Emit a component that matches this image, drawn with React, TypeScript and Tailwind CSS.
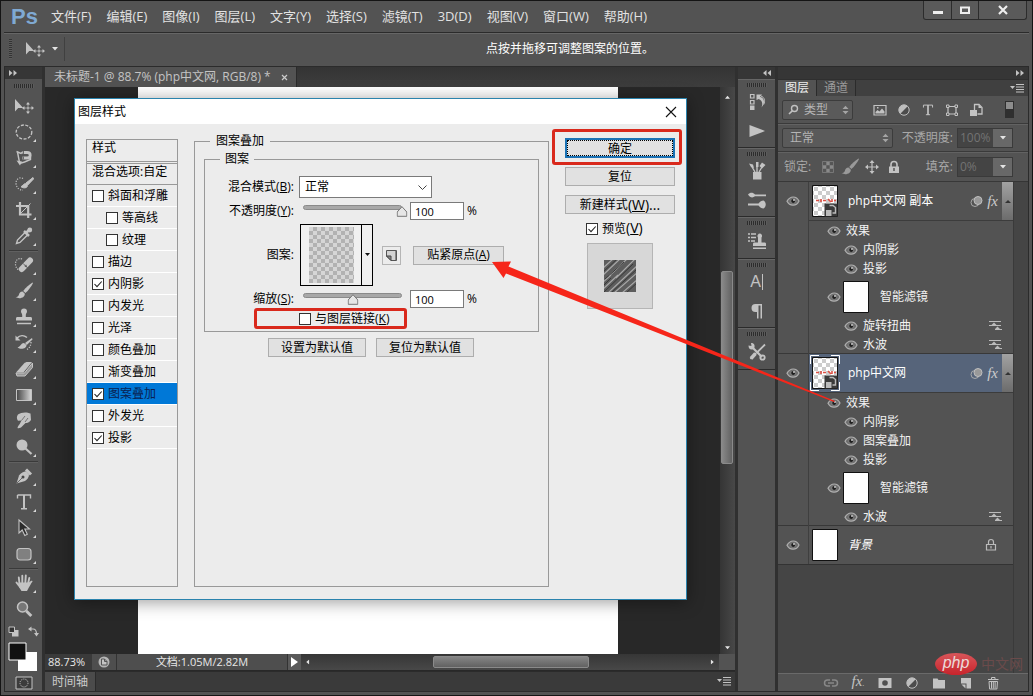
import React, { useState } from "react";

type IconProps = { children: React.ReactNode; className?: string; box?: string };

function Icon({ children, className = "size-5", box = "0 0 20 20" }: IconProps) {
  return (
    <svg viewBox={box} className={`${className} shrink-0`} fill="none" stroke="none" aria-hidden="true">
      {children}
    </svg>
  );
}

const C = "#c3c3c3";

/* ---------- shared glyphs ---------- */

function MoveGlyph() {
  return (
    <Icon className="h-5 w-6" box="0 0 24 20">
      <path d="M3 3v12.500l3.200-3.400h5z" fill={C} />
      <path d="M16 7.500v9M11.500 12h9" stroke={C} strokeWidth="1" />
      <path d="M16 6l2 2.400h-4zM16 18l2-2.400h-4zM10 12l2.400-2v4zM22 12l-2.400-2v4z" fill={C} />
      <path d="M14 10h4v4h-4z" stroke="#535353" strokeWidth=".6" />
    </Icon>
  );
}

function Eye() {
  return (
    <Icon className="h-[10px] w-[14px]" box="0 0 14 10">
      <path d="M1 5.300C3 1.700 5 1 7.200 1S11.500 2 13 5C11.500 8.300 9.200 9.200 7 9.200S2.500 8.200 1 5.300z" fill="#6e6e6e" stroke="#b0b0b0" strokeWidth="1.200" />
      <circle cx="7.200" cy="5" r="2.400" fill="#1e1e1e" stroke="#999" strokeWidth=".6" />
      <circle cx="8" cy="4" r=".9" fill="#ddd" />
    </Icon>
  );
}

function BrushGlyph({ color = C }: { color?: string }) {
  return (
    <Icon>
      <path d="M18.500 1.500c-3 1.800-7 5.300-9.300 8.400l2.200 2.100c3-2.400 6-6.600 7.600-10z" fill={color} />
      <path d="M8.500 10.500c-2.200 0-3.200 1.500-3.600 3.200-.4 1.400-1.700 2.200-3.400 2.400 2.500 1.500 5.800 1.500 8-.4 1.200-1.200 1.500-2.500 1.200-3.300z" fill={color} />
    </Icon>
  );
}

function Stamp() {
  return (
    <>
      <path d="M10 1.500a3 3 0 0 0-3 3c0 1.500 1.200 2 1.200 3.500v2H3.500c-1 0-1.500.6-1.500 1.500v2h16v-2c0-.9-.5-1.500-1.500-1.500h-4.700V8c0-1.500 1.200-2 1.200-3.500a3 3 0 0 0-3-3z" fill={C} />
      <path d="M3 16.500h14" stroke={C} strokeWidth="1.500" />
    </>
  );
}

function TypeT({ className = "size-5" }: { className?: string }) {
  return (
    <Icon className={className}>
      <path d="M3.500 3h13v3.500M3.500 3v3.500M10 3v13.500M7 16.700h6" stroke={C} strokeWidth="1.400" />
      <path d="M9 3h2v14H9z" fill={C} />
    </Icon>
  );
}

function HalfCircle() {
  return (
    <Icon className="size-[14px]" box="0 0 14 14">
      <circle cx="7" cy="7" r="5.200" fill="#bdbdbd" />
      <path d="M10.700 3.300a5.200 5.200 0 0 1-7.400 7.400z" fill="#4c4c4c" />
      <circle cx="7" cy="7" r="5.200" stroke="#bdbdbd" />
    </Icon>
  );
}

function DownTri({ className = "w-[6px]" }: { className?: string }) {
  return (
    <Icon className={className} box="0 0 6 4">
      <path d="M0 0h6L3 3.500z" fill="#e4e4e4" />
    </Icon>
  );
}

function UpDown() {
  return (
    <Icon className="h-[10px] w-[7px]" box="0 0 7 10">
      <path d="M.5 4L3.500.8 6.500 4zM.5 6l3 3.200 3-3.200z" fill="#a5a5a5" />
    </Icon>
  );
}

function MenuGlyph() {
  return (
    <Icon className="h-[9px] w-[14px]" box="0 0 14 9">
      <path d="M0 2h5L2.500 5z" fill={C} />
      <path d="M6 .5h8M6 3h8M6 5.500h8M6 8h8" stroke={C} />
    </Icon>
  );
}

function DoubleArrow({ flip = false }: { flip?: boolean }) {
  return (
    <Icon className={flip ? "h-[6px] w-2 rotate-180" : "h-[6px] w-2"} box="0 0 8 6">
      <path d="M0 0l3.500 3L0 6zM4.500 0L8 3 4.500 6z" fill={C} />
    </Icon>
  );
}

function Grip() {
  return (
    <span className="h-[4px] w-5 bg-[repeating-linear-gradient(90deg,#2c2c2c_0_1px,#5c5c5c_1px_2px)]" />
  );
}

/* ---------- toolbar ---------- */

const tools: (null | { name: string; more?: boolean; icon: React.ReactNode })[] = [
  { name: "移动", icon: <MoveGlyph /> },
  {
    name: "椭圆选框",
    more: true,
    icon: (
      <Icon>
        <ellipse cx="10" cy="10" rx="7.800" ry="7" stroke={C} strokeWidth="1.300" strokeDasharray="3 1.500" />
      </Icon>
    ),
  },
  {
    name: "磁性套索",
    more: true,
    icon: (
      <Icon>
        <path d="M2.500 3.500l4.500 2 1.500-1.500M3.500 4l2 10.500M5.500 15.500l5-1.500 6-2.500V9" stroke={C} strokeWidth="1.400" />
        <path d="M8.500 4.500H13c2.300 0 3.200 1.200 3.200 2.700S15 10 13 10H8.500" stroke={C} strokeWidth="2.800" />
        <path d="M2.500 12.500l3.500 5 2-4z" fill={C} />
        <path d="M9.500 3v3M9.500 8.500v3" stroke="#535353" strokeWidth=".8" />
      </Icon>
    ),
  },
  {
    name: "快速选择",
    more: true,
    icon: (
      <Icon>
        <path d="M9 4.500C6 2.500 2 5 2 9s3 7.500 7 7" stroke={C} strokeWidth="1.200" strokeDasharray="1.200 1.400" />
        <path d="M19 3.500L12 9l1.800 2L19.500 5zM11.500 9.500c-2 .2-2.700 2.500-4.500 3.200 2 1.800 6.500 1.600 6.500-1.200z" fill={C} stroke={C} />
      </Icon>
    ),
  },
  {
    name: "裁剪",
    more: true,
    icon: (
      <Icon>
        <path d="M6 2v12.500h11.500M2 6h12.200v12" stroke={C} strokeWidth="2.200" />
        <path d="M6.500 13.500L16.500 3.500" stroke={C} strokeWidth="1" />
      </Icon>
    ),
  },
  {
    name: "吸管",
    more: true,
    icon: (
      <Icon>
        <path d="M11 6.500L3.500 14 2.500 17.500 6 16.500 13.500 9" stroke={C} strokeWidth="1.400" />
        <path d="M10 5l5 5M12 7l4-4" stroke={C} strokeWidth="2.500" />
        <circle cx="15.800" cy="4" r="2.400" fill={C} />
      </Icon>
    ),
  },
  null,
  {
    name: "污点修复画笔",
    more: true,
    icon: (
      <Icon>
        <path d="M8 4C4.500 2.500 1.500 5 1.500 9c0 3 1.500 5 3.500 6" stroke={C} strokeWidth="1.200" strokeDasharray="1.200 1.300" />
        <path d="M7.800 14L16 5.500" stroke={C} strokeWidth="6" strokeLinecap="round" />
        <path d="M9.300 8.800l5 4.800M10.800 11.300h2M12 9.800v2" stroke="#5c5c5c" strokeWidth="1" />
      </Icon>
    ),
  },
  { name: "画笔", more: true, icon: <BrushGlyph /> },
  {
    name: "仿制图章",
    more: true,
    icon: (
      <Icon>
        <Stamp />
      </Icon>
    ),
  },
  {
    name: "历史记录画笔",
    more: true,
    icon: (
      <Icon>
        <path d="M3 5c3-3 7-3 10-.5" stroke={C} strokeWidth="1.500" />
        <path d="M1.500 2.500v5h5zM18 5l-7 5 1.800 2L18.500 6.500zM10 10c-3 0-3.500 3.500-6.500 4.500 3 2.500 9 1.500 9-2.500z" fill={C} />
        <path d="M17 9c0 4-2 6-4 7.500" stroke={C} strokeWidth="1.300" strokeDasharray="1.200 1.300" />
      </Icon>
    ),
  },
  {
    name: "橡皮擦",
    more: true,
    icon: (
      <Icon>
        <path d="M2 13.500L10 4.500c1-1 2-1.500 3.500-1.500H18l-8.500 10.500z" fill={C} />
        <path d="M10.500 14L18.500 4v4.500L11 17H3l-1-3z" fill="#989898" stroke={C} />
      </Icon>
    ),
  },
  {
    name: "渐变",
    more: true,
    icon: (
      <Icon>
        <defs>
          <linearGradient id="gradientTool">
            <stop stopColor="#444" />
            <stop offset="1" stopColor="#d8d8d8" />
          </linearGradient>
        </defs>
        <path d="M2.500 4.500h15v11h-15z" fill="url(#gradientTool)" stroke={C} />
      </Icon>
    ),
  },
  {
    name: "涂抹",
    more: true,
    icon: (
      <Icon>
        <path d="M4 3.500C7 1 13 .8 16.500 2.500L17 9c-1.500 2.500-4 3-5.500 3L8 15.500c-1 1.500-3.500 2-4.500 1.500C3.500 15.500 5 14 6 12.500l1.500-3-3.500.3c-1.500-2-1.500-4.500 0-6.300z" fill={C} />
        <path d="M7.500 9.500L11 5M11 11l3-4" stroke="#6b6b6b" strokeWidth=".9" />
      </Icon>
    ),
  },
  {
    name: "减淡",
    more: true,
    icon: (
      <Icon>
        <circle cx="8" cy="8" r="5.500" fill={C} />
        <path d="M11.500 11.500l6 5.500" stroke={C} strokeWidth="2.200" />
      </Icon>
    ),
  },
  null,
  {
    name: "钢笔",
    more: true,
    icon: (
      <Icon>
        <path d="M2.500 17.500L5 9.500C7 7 9.500 5.500 12 5.200L15 8.500c0 3-1.800 5-4 6.500z" fill={C} />
        <path d="M12 3.500l5 5" stroke={C} strokeWidth="3" />
        <path d="M3 17l5-5" stroke="#505050" strokeWidth=".8" />
        <circle cx="9" cy="11" r="1.500" fill="#454545" />
      </Icon>
    ),
  },
  { name: "文字", more: true, icon: <TypeT /> },
  {
    name: "路径选择",
    more: true,
    icon: (
      <Icon>
        <path d="M5 2v13l3.200-3 2.600 5.500 2.500-1.200-2.500-5.300h4.700z" fill="#2c2c2c" stroke={C} strokeWidth="1.100" />
      </Icon>
    ),
  },
  {
    name: "圆角矩形",
    more: true,
    icon: (
      <Icon>
        <rect x="3" y="4.500" width="14" height="11.500" rx="3" fill="#808080" stroke={C} strokeWidth="1.200" />
      </Icon>
    ),
  },
  null,
  {
    name: "抓手",
    more: true,
    icon: (
      <Icon>
        <path d="M5.500 11L4.800 4.500M8.300 10V2.800M11.300 10L11.800 2.500M14 11l1.300-6M6 14L2.500 9.500" stroke={C} strokeWidth="1.900" strokeLinecap="round" />
        <path d="M4.700 9.500h10.200l2.300-1.700c.8-.4 1.600.3 1.200 1-1.500 1.700-2 3.700-3.700 6L13 18H7.500l-2.300-3.500z" fill={C} />
      </Icon>
    ),
  },
  {
    name: "缩放",
    icon: (
      <Icon>
        <circle cx="8.500" cy="8" r="5" fill="#777" stroke={C} strokeWidth="1.500" />
        <path d="M12.300 12l5 5" stroke={C} strokeWidth="3" />
      </Icon>
    ),
  },
];

function Toolbar() {
  return (
    <aside className="flex w-[37px] shrink-0 flex-col bg-[#535353]" aria-label="工具">
      <div className="flex h-3 shrink-0 items-center bg-[#363636] pl-1">
        <DoubleArrow />
      </div>
      <div className="flex h-[14px] shrink-0 items-center justify-center">
        <Grip />
      </div>
      {tools.map((t, i) =>
        t === null ? (
          <div key={i} className="mx-1 h-[3px] shrink-0 border-y border-t-[#535353] border-b-[#606060] bg-[#3a3a3a]" />
        ) : (
          <button key={i} aria-label={t.name} className="relative flex h-[26px] w-full shrink-0 items-center justify-center">
            {t.icon}
            {t.more && (
              <svg viewBox="0 0 3 3" className="absolute right-[6px] bottom-[3px] size-[3px]" aria-hidden="true">
                <path d="M3 0v3H0z" fill="#d8d8d8" />
              </svg>
            )}
          </button>
        )
      )}
      <div className="flex h-[18px] shrink-0 items-center justify-between px-[3px]">
        <Icon className="size-[11px]" box="0 0 11 11">
          <path d="M4 4h6.500v6.500H4z" fill={C} />
          <path d="M1 1h5.500v5.500H1z" fill="#333" stroke={C} />
        </Icon>
        <Icon className="size-[11px]" box="0 0 11 11">
          <path d="M2 3h3c2.500 0 3.500 1.500 3.500 5" stroke={C} strokeWidth="1.200" />
          <path d="M3.500.5v5L0 3zM6 7h5L8.500 10.500z" fill={C} />
        </Icon>
      </div>
      <div className="flex h-[34px] shrink-0 pt-[2px] pl-[3px]">
        <Icon className="h-[29px] w-[29px]" box="0 0 29 29">
          <path d="M10 10h19v19H10z" fill="#fff" />
          <path d="M1 1h17v17H1z" fill="#111" stroke="#fff" />
        </Icon>
      </div>
      <button aria-label="以快速蒙版模式编辑" className="flex h-5 items-center justify-center">
        <Icon className="h-[14px] w-[18px]" box="0 0 18 14">
          <path d="M1 1h16v12H1z" fill="#3c3c3c" stroke={C} />
          <circle cx="9" cy="7" r="4" stroke={C} strokeDasharray="1.200 1" />
        </Icon>
      </button>
    </aside>
  );
}

/* ---------- icon dock ---------- */

const dockGroups: { name: string; icon: React.ReactNode }[][] = [
  [
    {
      name: "历史记录",
      icon: (
        <Icon>
          <path d="M3.500 2.500h3.500v3.500H3.500zM3.500 8.500h3.500v3.500H3.500z" stroke={C} strokeWidth="1.200" />
          <path d="M3 13.500h4.500v4.500H3z" fill={C} />
          <path d="M9.500 8V2.500H15L13 4.700c4.500 1.500 5.500 6 1.500 10.800 1.500-4 .8-7-2.700-8.600z" fill={C} />
          <path d="M14 4c3.500 1.500 4.500 4.500 2.700 8.500" stroke={C} strokeWidth="1" />
        </Icon>
      ),
    },
    {
      name: "动作",
      icon: (
        <Icon>
          <path d="M2.500 4v12L18 10z" fill={C} />
        </Icon>
      ),
    },
  ],
  [
    {
      name: "画笔",
      icon: (
        <Icon>
          <path d="M6 11h8.500v7.500H6z" fill={C} />
          <path d="M8 11L4.500 5M10 11V4M12 11l3-5" stroke={C} strokeWidth="1.400" />
          <path d="M2 2.500l4 1 1 3.500-3-1zM9 1h2.500v5H9zM12.500 5L15 1.500 18.500 4 15 7.500z" fill={C} />
        </Icon>
      ),
    },
    {
      name: "画笔预设",
      icon: (
        <Icon>
          <path d="M1 4.500C3 2 6 2 8 4.500h11v1.800H8C6 8 3 8 1 4.500zM1 13.500h10.500c1.500-2 3-3 5-3 3 2 3 6 0 8-2 0-3.500-1.200-5-3H1z" fill={C} />
        </Icon>
      ),
    },
  ],
  [
    {
      name: "仿制源",
      icon: (
        <Icon>
          <path d="M1 3h2M1 6.500h2M1 10h2M4 3h5M4 6.500h5M4 10h4" stroke={C} strokeWidth="1.500" />
          <path d="M13 2.500a2.500 2.500 0 0 0-2 4v5H7.500c-1 0-1.500.5-1.500 1.500V15h13v-2c0-1-.5-1.500-1.500-1.500h-3V6.500a2.500 2.500 0 0 0-1.500-4zM6 16.500h13V18H6z" fill={C} />
        </Icon>
      ),
    },
  ],
  [
    {
      name: "字符",
      icon: <span className="border-r border-[#c3c3c3] pr-px font-['Liberation_Sans'] text-base leading-4 text-[#c3c3c3]">A</span>,
    },
    {
      name: "段落",
      icon: (
        <Icon>
          <path d="M15 3H8.500a4 4 0 0 0 0 8H10v6.500h1.500V4.500h2v13H15z" fill={C} />
        </Icon>
      ),
    },
  ],
  [
    {
      name: "工具预设",
      icon: (
        <Icon>
          <path d="M5 5l10 10" stroke={C} strokeWidth="2.200" />
          <path d="M1.500 3.500l3 .5-.5-3c3 0 4 2 3.500 4.500L5.500 7.500C3 8 1.500 6.500 1.500 3.500z" fill={C} />
          <circle cx="15.500" cy="15.500" r="2.200" stroke={C} strokeWidth="1.800" />
          <path d="M18 2.500L9.500 11M9 11l-5.500 6" stroke={C} strokeWidth="1.800" />
          <path d="M8.500 11.500L4 16.500" stroke={C} strokeWidth="3.500" />
        </Icon>
      ),
    },
  ],
];

function Dock() {
  return (
    <aside className="flex w-[37px] shrink-0 flex-col bg-[#535353]" aria-label="面板图标">
      <div className="flex h-3 items-center justify-end bg-[#363636] pr-1">
        <DoubleArrow flip />
      </div>
      {dockGroups.map((g, i) => (
        <div key={i} className="flex flex-col items-center border-t border-b border-t-[#666] border-b-[#2b2b2b] pt-[3px] pb-[2px]">
          <Grip />
          <div className="flex flex-col">
            {g.map((d) => (
              <button key={d.name} aria-label={d.name} className={g.length > 1 ? "flex h-[29px] w-8 items-center justify-center" : "flex h-[31px] w-8 items-center justify-center"}>
                {d.icon}
              </button>
            ))}
          </div>
        </div>
      ))}
    </aside>
  );
}

/* ---------- layers panel ---------- */

const darkSelect =
  "size-full appearance-none rounded-[2px] border border-[#3c3c3c] bg-[#5a5a5a] text-xs leading-4 text-[#b5b5b5]";

function NumberBox({ label, value }: { label: string; value: string }) {
  return (
    <label className="ml-auto flex items-center gap-1 text-xs text-[#a8a8a8]">
      {label}
      <span className="flex h-5 w-[56px] border border-[#3a3a3a] bg-[#444]">
        <input defaultValue={value} className="w-[35px] bg-transparent px-[2px] text-xs text-[#737373] outline-none" />
        <span className="flex flex-1 items-center justify-center bg-[#686868]">
          <DownTri />
        </span>
      </span>
    </label>
  );
}

function Thumb({ selected = false, checker = false }: { selected?: boolean; checker?: boolean }) {
  return (
    <Icon className="h-[36px] w-[30px]" box="0 0 30 36">
      {checker ? (
        <>
          <defs>
            <pattern id="checker" width="8" height="8" patternUnits="userSpaceOnUse">
              <path d="M0 0h8v8H0z" fill="#fff" />
              <path d="M0 0h4v4H0zM4 4h4v4H4z" fill="#ccc" />
            </pattern>
          </defs>
          <path d="M2.500 2.500h25v31h-25z" fill="url(#checker)" stroke="#111" />
          <path d="M6 17.500h3M11 16v3M13 17.500h3M18 16l3 3M22 16v3M24 17.500h2" stroke="#dc5145" strokeWidth="1.600" />
          <path d="M14.500 20.500h13v13h-13z" fill="#3b3b3b" />
          <path d="M19.500 22.500h3.500l2.500 2v5.500h-3" stroke="#bbb" strokeWidth="1.400" />
          <path d="M16 27h5.500v6H16z" fill="#bbb" />
        </>
      ) : (
        <path d="M2.500 2.500h25v31h-25z" fill="#fff" stroke="#111" />
      )}
      {selected && <path d="M.5 9V.5H9M21 .5h8.500V9M.5 27v8.500H9M21 35.500h8.500V27" stroke="#fff" />}
    </Icon>
  );
}

function LayerRow({ name, selected = false }: { name: string; selected?: boolean }) {
  return (
    <div className="flex h-[39px] border-b border-[#3c3c3c]">
      <div className={selected ? "flex flex-1 items-center bg-[#56647a] pl-px" : "flex flex-1 items-center pl-px"}>
        <Thumb checker selected={selected} />
        <span className="ml-2 flex-1 text-xs text-white">{name}</span>
        <Icon className="size-[13px]" box="0 0 13 13">
          <circle cx="5" cy="7.500" r="4" stroke="#aaa" />
          <circle cx="8" cy="5.500" r="4" fill="#999" stroke="#c0c0c0" />
        </Icon>
        <span className="mx-1 font-['Liberation_Serif'] text-[15px] leading-4 text-[#ccc] italic">fx</span>
        <span className="flex h-full w-[11px] items-center justify-center bg-[linear-gradient(#a2a2a2,#6c6c6c)]">
          <Icon className="h-[3px] w-[6px]" box="0 0 6 3">
            <path d="M0 3h6L3 0z" fill="#333" />
          </Icon>
        </span>
      </div>
    </div>
  );
}

function EffectRow({ name, top = false, filter = false }: { name: string; top?: boolean; filter?: boolean }) {
  return (
    <div className={top ? "flex h-[19px] items-center gap-[5px] pl-[18px]" : "flex h-[19px] items-center gap-[5px] pl-[35px]"}>
      <Eye />
      <span className="flex-1 text-xs text-[#f2f2f2]">{name}</span>
      {filter && (
        <Icon className="mr-[11px] h-3 w-[13px]" box="0 0 13 12">
          <path d="M0 1.500h12M0 5.500h12M6 9.500h7" stroke="#bbb" />
          <path d="M2.500 5l2.500-2.500L7.500 5zM6 9l2.500-2.500L11 9z" fill="#bbb" />
        </Icon>
      )}
    </div>
  );
}

function SmartRow() {
  return (
    <div className="flex h-[38px] items-center pl-[18px]">
      <Eye />
      <Thumb />
      <span className="ml-[9px] text-xs text-[#f2f2f2]">智能滤镜</span>
    </div>
  );
}

const layerItem = "flex bg-[#535353] shadow-[0_-1px_0_#383838]";
const eyeCol = "flex h-[38px] w-[30px] shrink-0 items-center justify-center";

function LayersPanel() {
  const footer: { name: string; icon: React.ReactNode }[] = [
    {
      name: "链接图层",
      icon: (
        <Icon className="size-4" box="0 0 16 16">
          <path d="M7 5H4.500a3 3 0 0 0 0 6H7M9 5h2.500a3 3 0 0 1 0 6H9M5 8h6" stroke="#888" strokeWidth="1.500" />
        </Icon>
      ),
    },
    { name: "图层样式", icon: <span className="font-['Liberation_Serif'] text-[15px] leading-4 text-[#c3c3c3] italic">fx<span className="text-[8px]">.</span></span> },
    {
      name: "图层蒙版",
      icon: (
        <Icon className="size-4" box="0 0 16 16">
          <path d="M1.500 3h13v10h-13z" fill={C} />
          <circle cx="8" cy="8" r="2.800" fill="#505050" />
        </Icon>
      ),
    },
    { name: "调整图层", icon: <HalfCircle /> },
    {
      name: "新建组",
      icon: (
        <Icon className="size-4" box="0 0 16 16">
          <path d="M2 3.500h4.500l1 1.500H14v8.500H2z" fill={C} />
        </Icon>
      ),
    },
    {
      name: "新建图层",
      icon: (
        <Icon className="size-4" box="0 0 16 16">
          <path d="M3 3h10v10.500H8.500v-5H3z" fill={C} />
          <path d="M3.500 9.500h4v4z" fill={C} />
        </Icon>
      ),
    },
    {
      name: "删除图层",
      icon: (
        <Icon className="size-4" box="0 0 16 16">
          <path d="M3 4.500h10.500M6.500 4V2.500h3.500V4M4 6.500h8.500l-.6 7.500H4.600zM6.500 7v6.500M8.300 7v6.500M10.100 7v6.500" stroke={C} />
        </Icon>
      ),
    },
  ];

  return (
    <section className="flex w-[250px] shrink-0 flex-col bg-[#535353]" aria-label="图层面板">
      <div className="flex h-3 shrink-0 items-center justify-end bg-[#363636] pr-1">
        <DoubleArrow />
      </div>
      <div className="flex h-[17px] shrink-0 items-stretch border-t border-[#2f2f2f] bg-[#404040] text-xs leading-4">
        <button className="bg-[#535353] px-[7px] text-[#eee]">图层</button>
        <button className="border-r border-l border-[#2b2b2b] bg-[#454545] px-[7px] text-[#9b9b9b]">通道</button>
        <span className="mr-1 ml-auto flex items-center">
          <MenuGlyph />
        </span>
      </div>

      <div className="flex h-[28px] shrink-0 items-center border-b border-[#3a3a3a] px-1">
        <label className="relative flex h-[20px] w-[71px] items-center">
          <select aria-label="类型" className={`${darkSelect} pl-[21px]`}>
            <option>类型</option>
          </select>
          <span className="pointer-events-none absolute inset-y-0 left-[6px] flex items-center">
            <Icon className="size-[11px]" box="0 0 11 11">
              <circle cx="6.500" cy="4.500" r="3" stroke="#c0c0c0" strokeWidth="1.400" />
              <path d="M4.500 6.700L1 10" stroke="#c0c0c0" strokeWidth="1.600" />
            </Icon>
          </span>
          <span className="pointer-events-none absolute inset-y-0 right-[4px] flex items-center">
            <UpDown />
          </span>
        </label>
        <div className="ml-5 flex items-center gap-[10px]">
          <Icon className="size-[14px]" box="0 0 14 14">
            <path d="M1 2.500h12v9.500H1z" stroke={C} strokeWidth="1.200" />
            <path d="M2.500 10.500V9l2-2 2 1.500 2.500-3 2.500 3v2z" fill={C} />
            <path d="M4 4h1.500v1.500H4z" fill={C} />
          </Icon>
          <HalfCircle />
          <TypeT className="size-[14px]" />
          <Icon className="size-[14px]" box="0 0 14 14">
            <path d="M3 3.500h8v7.500H3z" stroke={C} strokeWidth="1.200" />
            <path d="M1.500 2h2.500v2.500H1.500zM10 2h2.500v2.500H10zM1.500 10H4v2.500H1.500zM10 10h2.500v2.500H10z" fill="#535353" stroke={C} />
          </Icon>
          <Icon className="size-[14px]" box="0 0 14 14">
            <path d="M5.500 7V1.500H10L13 4.500v6.500H8.500" stroke={C} strokeWidth="1.300" />
            <path d="M1 7h7v6H1zM9.500 1.500V5H13z" fill={C} />
          </Icon>
        </div>
        <Icon className="mr-[10px] ml-auto h-[17px] w-[9px]" box="0 0 9 17">
          <path d="M0 0h9v17H0z" fill="#2f2f2f" />
          <path d="M1 1h7v7H1z" fill="#8d8d8d" />
        </Icon>
      </div>

      <div className="flex h-[28px] shrink-0 items-center border-t border-b border-t-[#626262] border-b-[#3a3a3a] pr-[15px] pl-1">
        <label className="relative flex h-[20px] w-[111px] items-center">
          <select aria-label="混合模式" className={`${darkSelect} pl-[7px]`}>
            <option>正常</option>
          </select>
          <span className="pointer-events-none absolute inset-y-0 right-[4px] flex items-center">
            <UpDown />
          </span>
        </label>
        <NumberBox label="不透明度:" value="100%" />
      </div>

      <div className="flex h-[29px] shrink-0 items-center border-t border-[#626262] pr-[15px] pl-[6px] text-xs text-[#a8a8a8]">
        锁定:
        <div className="ml-[10px] flex items-center gap-2">
          <Icon className="size-[14px]" box="0 0 14 14">
            <path d="M1.500 1.500h11v11h-11z" fill="#8a8a8a" stroke="#777" />
            <path d="M2 2h3.300v3.300H2zM8.700 2H12v3.300H8.700zM5.300 5.300h3.400v3.400H5.300zM2 8.700h3.300V12H2zM8.700 8.700H12V12H8.700z" fill="#565656" />
          </Icon>
          <span className="flex size-[14px] items-center justify-center">
            <BrushGlyph color="#999" />
          </span>
          <Icon className="size-[14px]" box="0 0 14 14">
            <path d="M7 2v10M2 7h10" stroke={C} strokeWidth="1.200" />
            <path d="M7 0l2.500 3h-5zM7 14l2.500-3h-5zM0 7l3-2.500v5zM14 7l-3-2.500v5z" fill={C} />
          </Icon>
          <Icon className="size-[14px]" box="0 0 14 14">
            <path d="M4 7V4.500a3 3 0 0 1 6 0V7" stroke={C} strokeWidth="1.600" />
            <path d="M2 6.500h10V13H2z" fill={C} />
            <path d="M7 8v3" stroke="#444" strokeWidth="1.300" />
          </Icon>
        </div>
        <NumberBox label="填充:" value="0%" />
      </div>

      <div className="flex min-h-0 flex-1 border-t border-[#353535] bg-[#454545]">
        <ul className="min-w-0 flex-1">
          <li className={layerItem}>
            <div className={eyeCol}><Eye /></div>
            <div className="flex-1 border-l border-[#3f3f3f]">
              <LayerRow name="php中文网 副本" />
              <EffectRow name="效果" top />
              <EffectRow name="内阴影" />
              <EffectRow name="投影" />
              <SmartRow />
              <EffectRow name="旋转扭曲" filter />
              <EffectRow name="水波" filter />
            </div>
          </li>
          <li className={layerItem}>
            <div className={eyeCol}><Eye /></div>
            <div className="flex-1 border-l border-[#3f3f3f]">
              <LayerRow name="php中文网" selected />
              <EffectRow name="效果" top />
              <EffectRow name="内阴影" />
              <EffectRow name="图案叠加" />
              <EffectRow name="投影" />
              <SmartRow />
              <EffectRow name="水波" filter />
            </div>
          </li>
          <li className={`${layerItem} h-[39px] border-b border-[#333]`}>
            <div className={eyeCol}><Eye /></div>
            <div className="flex flex-1 items-center border-l border-[#3f3f3f] pl-px">
              <Thumb />
              <span className="ml-2 flex-1 text-xs text-white italic">背景</span>
              <Icon className="mr-[15px] size-[14px]" box="0 0 14 14">
                <path d="M4.500 6.500V4a2.500 2.500 0 0 1 5 0v2.500M2.500 6.500h9V12h-9zM7 8v2.500" stroke="#bbb" strokeWidth="1.200" />
              </Icon>
            </div>
          </li>
        </ul>
        <div className="w-[15px] shrink-0 border-l border-[#3a3a3a] bg-[#454545]" />
      </div>

      <div className="flex h-[18px] shrink-0 items-center justify-end gap-[5px] border-t border-[#6a6a6a] pr-6">
        {footer.map((f) => (
          <button key={f.name} aria-label={f.name} className="flex h-4 w-[22px] items-center justify-center">
            {f.icon}
          </button>
        ))}
      </div>
    </section>
  );
}

/* ---------- dialog ---------- */

function Check({ label, defaultChecked = false, active = false }: { label: React.ReactNode; defaultChecked?: boolean; active?: boolean }) {
  return (
    <label className={active ? "flex items-center gap-1 text-xs leading-4 text-[#0b2150]" : "flex items-center gap-1 text-xs leading-4 text-black"}>
      <span className="relative size-[12px]">
        <input type="checkbox" defaultChecked={defaultChecked} className="peer block size-[12px] appearance-none border border-[#333] bg-white" />
        <svg viewBox="0 0 12 12" className="pointer-events-none absolute inset-0 hidden size-[12px] peer-checked:block" aria-hidden="true">
          <path d="M2.500 6l2.500 2.700L9.700 3.500" fill="none" stroke="#222" strokeWidth="1.100" />
        </svg>
      </span>
      <span>{label}</span>
    </label>
  );
}

function Key({ k }: { k: string }) {
  return (
    <>
      (<u>{k}</u>)
    </>
  );
}

function Slider({ label, start }: { label: string; start: number }) {
  const [v, setV] = useState(start);
  return (
    <span className="relative h-3 w-[99px]">
      <span className="block h-[5px] rounded-full border border-[#8a8a8a] bg-[#a8a8a8]" />
      <svg viewBox="0 0 11 11" className="absolute top-px size-[11px] -translate-x-1/2" style={{ left: `${v}%` }} aria-hidden="true">
        <path d="M5.500.7L10.300 6v4.300H.7V6z" fill="#e6e6e6" stroke="#777" />
      </svg>
      <input aria-label={label} type="range" value={v} onChange={(e) => setV(Number(e.target.value))} className="absolute inset-0 w-full opacity-0" />
    </span>
  );
}

const dlgButton = "flex h-[19px] items-center justify-center border border-[#adadad] bg-[#e1e1e1] text-xs leading-4 text-black";
const rowLabel = "w-[89px] shrink-0 text-right text-xs leading-4";

const styles: { name: string; on?: boolean; sub?: boolean; active?: boolean }[] = [
  { name: "斜面和浮雕" },
  { name: "等高线", sub: true },
  { name: "纹理", sub: true },
  { name: "描边" },
  { name: "内阴影", on: true },
  { name: "内发光" },
  { name: "光泽" },
  { name: "颜色叠加" },
  { name: "渐变叠加" },
  { name: "图案叠加", on: true, active: true },
  { name: "外发光" },
  { name: "投影", on: true },
];

function styleRow(s: (typeof styles)[number]) {
  if (s.active) return "flex h-[22px] items-center border-b border-white bg-[#0078d7] pl-[5px]";
  if (s.sub) return "flex h-[22px] items-center border-b border-white pl-[19px]";
  return "flex h-[22px] items-center border-b border-white pl-[5px]";
}

function AmountRow({ id, label, k, start }: { id: string; label: string; k: string; start: number }) {
  return (
    <div className="flex h-[18px] items-center">
      <label htmlFor={id} className={rowLabel}>
        {label}<Key k={k} />:
      </label>
      <span className="ml-[9px] flex">
        <Slider label={label} start={start} />
      </span>
      <input id={id} defaultValue="100" className="ml-2 h-[18px] w-[54px] border border-[#7a7a7a] bg-white px-1 text-[11px] outline-none" />
      <span className="ml-[3px] text-xs">%</span>
    </div>
  );
}

function LayerStyleDialog() {
  return (
    <div role="dialog" aria-label="图层样式" className="absolute top-[97px] left-[73px] flex h-[502px] w-[613px] flex-col border border-[#2a83ad] bg-[#ececec] text-black shadow-[0_2px_16px_rgba(0,0,0,0.4)]">
      <div className="flex h-[25px] shrink-0 items-center justify-between bg-white pr-[9px] pl-[3px]">
        <h2 className="text-xs">图层样式</h2>
        <button aria-label="关闭">
          <Icon className="size-3" box="0 0 12 12">
            <path d="M1 1l10 10M11 1L1 11" stroke="#111" strokeWidth="1.100" />
          </Icon>
        </button>
      </div>

      <div className="flex flex-1 px-[11px] pb-3">
        <div className="mt-[15px] w-[92px] shrink-0 border border-[#999]">
          <div className="h-[22px] border-b border-[#999] pl-[5px] text-xs leading-4">样式</div>
          <div className="mt-px h-[22px] border-t border-b border-[#999] pl-[5px] text-xs leading-4 whitespace-nowrap">混合选项:自定</div>
          <ul>
            {styles.map((s) => (
              <li key={s.name} className={styleRow(s)}>
                <Check label={s.name} defaultChecked={s.on} active={s.active} />
              </li>
            ))}
          </ul>
        </div>

        <fieldset className="mt-2 ml-4 w-[355px] shrink-0 border border-[#999] px-[9px]">
          <legend className="ml-[6px] px-[6px] text-xs leading-[18px]">图案叠加</legend>
          <fieldset className="h-[182px] border border-[#999]">
            <legend className="ml-[15px] px-[5px] text-xs leading-[18px]">图案</legend>
            <div className="flex flex-col gap-1 pt-2">
              <div className="flex h-[22px] items-center">
                <label htmlFor="blend" className={rowLabel}>
                  混合模式<Key k="B" />:
                </label>
                <span className="relative ml-[5px] h-[22px] w-[133px]">
                  <select id="blend" className="block size-full appearance-none border border-[#7a7a7a] bg-white pl-[5px] text-xs leading-4">
                    <option>正常</option>
                  </select>
                  <span className="pointer-events-none absolute inset-y-0 right-[5px] flex items-center">
                    <Icon className="h-[5px] w-[9px]" box="0 0 9 5">
                      <path d="M.5.500l4 4 4-4" stroke="#444" />
                    </Icon>
                  </span>
                </span>
              </div>
              <AmountRow id="opacity" label="不透明度" k="Y" start={100} />
              <div className="flex h-[62px] items-center">
                <span className={rowLabel}>图案:</span>
                <button aria-label="选择图案" className="ml-[6px] flex h-[62px] w-[73px] border border-black bg-[#f0f0f0]">
                  <span className="my-[2px] mr-[7px] ml-2 flex-1 self-stretch bg-[#dadada] bg-[repeating-conic-gradient(#b2b2b2_0_25%,#d6d6d6_0_50%)] bg-[length:8px_8px]" />
                  <span className="flex w-[11px] items-center justify-center border-l border-black">
                    <Icon className="w-[5px]" box="0 0 6 4">
                      <path d="M0 0h6L3 3.500z" fill="#111" />
                    </Icon>
                  </span>
                </button>
                <button aria-label="从此图案创建新的预设" className="ml-[9px] flex size-[19px] items-center justify-center border border-[#b5b5b5]">
                  <Icon className="size-[11px]" box="0 0 11 11">
                    <path d="M.5.500h10v10H5L.5 6z" fill="#d2d2d2" stroke="#555" />
                    <path d="M.5 6H5v4.500z" stroke="#444" fill="#888" />
                    <path d="M9.500 1v9" stroke="#888" />
                  </Icon>
                </button>
                <button className={`${dlgButton} ml-3 w-[91px]`}>贴紧原点<Key k="A" /></button>
              </div>
              <div>
                <AmountRow id="scale" label="缩放" k="S" start={50} />
                <div className="mr-[131px] ml-[49px] flex h-[21px] items-center rounded-[3px] border-3 border-[#d9291c] pl-[42px]">
                  <Check label={<>与图层链接<Key k="K" /></>} />
                </div>
              </div>
            </div>
          </fieldset>
          <div className="mt-[6px] flex gap-[10px] pl-[64px]">
            <button className={`${dlgButton} w-[98px]`}>设置为默认值</button>
            <button className={`${dlgButton} w-[98px]`}>复位为默认值</button>
          </div>
        </fieldset>

        <div className="flex flex-1 flex-col gap-[9px] pt-[14px] pl-4">
          <div className="relative">
            <button className="flex h-5 w-full items-center justify-center border-2 border-[#1a72b5] bg-[#e1e1e1] pt-[2px] text-xs outline-1 -outline-offset-3 outline-dotted outline-black">
              确定
            </button>
            <span className="pointer-events-none absolute -top-[9px] -right-[7px] -bottom-[7px] -left-[13px] rounded-[3px] border-3 border-[#d9291c]" />
          </div>
          <button className={dlgButton}>复位</button>
          <button className={dlgButton}>
            新建样式<span className="text-sm leading-4"><Key k="W" />...</span>
          </button>
          <div className="flex h-[11px] items-center pl-[21px]">
            <Check label={<>预览<span className="text-sm leading-4"><Key k="V" /></span></>} defaultChecked />
          </div>
          <div className="flex size-[66px] items-center justify-center self-center border border-[#b5b5b5] bg-[#d7d7d7]">
            <Icon className="size-[32px]" box="0 0 32 32">
              <path d="M0 0h32v32H0z" fill="#5d5d5d" />
              <path d="M-2 9L10-2M-2 16L17-2M5 16L23-1M-2 30L14 15M12 18L33-3M4 33L33 6M10 33L34 12M18 33l16-14M-2 23l9-8" stroke="#a9a9a9" strokeWidth="1.200" />
              <path d="M-2 13L14-2M1 19L20 2M0 32L29 4M7 33L33 9M22 33l12-11M-1 26l8-8" stroke="#393939" strokeWidth="1" />
            </Icon>
          </div>
        </div>
      </div>
    </div>
  );
}

/* ---------- document area ---------- */

function DocumentArea() {
  return (
    <main className="flex min-w-0 flex-1 flex-col bg-[#282828]">
      <div className="flex h-5 shrink-0 bg-[linear-gradient(#343434,#3d3d3d)]">
        <div className="flex items-center gap-[10px] border-r border-[#2b2b2b] bg-[#535353] pr-2 pl-[9px] text-xs whitespace-nowrap text-[#c4c4c4]">
          <span>未标题-1 @ 88.7% (php中文网, RGB/8) *</span>
          <button aria-label="关闭文档">
            <Icon className="size-[7px]" box="0 0 7 7">
              <path d="M1 1l5 5M6 1L1 6" stroke="#ccc" strokeWidth="1.200" />
            </Icon>
          </button>
        </div>
      </div>
      <div className="flex min-h-0 flex-1">
        <div className="flex flex-1 pr-[102px] pl-[93px]">
          <div className="flex-1 bg-white" />
        </div>
        <div className="flex w-[15px] flex-col items-center bg-[linear-gradient(90deg,#353535,#484848)] py-1 pr-px">
          <span className="rotate-180 pb-1">
            <DownTri className="h-1 w-[5px]" />
          </span>
          <span className="mt-[172px] h-[193px] w-3 rounded-[2px] border border-[#8a8a8a] bg-[linear-gradient(90deg,#888,#626262)]" />
          <span className="mt-auto">
            <DownTri className="h-1 w-[5px]" />
          </span>
        </div>
      </div>
      <div className="flex h-4 shrink-0 items-stretch bg-[#414141] text-xs leading-4 text-[#e8e8e8]">
        <input aria-label="缩放比例" defaultValue="88.73%" className="w-[47px] bg-[#3a3a3a] px-[3px] text-[11px] outline-none" />
        <span className="flex w-[25px] items-center justify-center border-r border-[#333] bg-[#4e4e4e]">
          <Icon className="size-3" box="0 0 12 12">
            <circle cx="6" cy="6" r="5.500" fill="#b5b5b5" />
            <path d="M3.500 3h3l2.500 2.500V9H3.500z" fill="#c4c4c4" stroke="#555" />
            <path d="M6.500 3v2.500H9" stroke="#555" />
          </Icon>
        </span>
        <span className="w-[170px] bg-[#4e4e4e] text-center text-[11px]">文档:1.05M/2.82M</span>
        <button aria-label="状态信息" className="flex w-[14px] items-center justify-center border-l border-[#333] bg-[#5a5a5a]">
          <Icon className="h-[10px] w-[7px]" box="0 0 7 10">
            <path d="M0 0v10l7-5z" fill="#fff" />
          </Icon>
        </button>
        <div className="flex flex-1 items-center bg-[linear-gradient(#363636,#484848)] px-1">
          <span className="rotate-90">
            <DownTri className="h-1 w-[5px]" />
          </span>
          <span className="ml-[123px] h-3 w-[156px] rounded-[2px] border border-[#8a8a8a] bg-[linear-gradient(#858585,#626262)]" />
          <span className="ml-auto -rotate-90">
            <DownTri className="h-1 w-[5px]" />
          </span>
        </div>
        <span className="w-[16px] bg-[#535353]" />
      </div>
      <div className="mt-px flex h-5 shrink-0 items-stretch border-t border-[#2b2b2b] bg-[#3a3a3a]">
        <button className="border-r border-[#2b2b2b] bg-[#4b4b4b] px-[7px] text-xs text-[#ccc]">时间轴</button>
        <span className="mr-1 ml-auto flex items-center">
          <MenuGlyph />
        </span>
      </div>
    </main>
  );
}

const menus = ["文件(F)", "编辑(E)", "图像(I)", "图层(L)", "文字(Y)", "选择(S)", "滤镜(T)", "3D(D)", "视图(V)", "窗口(W)", "帮助(H)"];

export default function App() {
  return (
    <div className="relative flex h-screen min-h-[696px] w-full flex-col overflow-hidden border border-[#141414] bg-[#535353] pr-[3px] pb-[3px] pl-[3px] font-['Open_Sans','Noto_Sans_CJK_SC',sans-serif]">
      <header className="flex h-[31px] shrink-0 items-center">
        <span className="ml-[7px] w-[33px] font-['Liberation_Sans'] text-[22px] leading-7 font-bold text-[#7fa9d3]">Ps</span>
        <nav className="flex gap-[15px] pl-[7px]">
          {menus.map((m) => (
            <button key={m} className="text-[13px] whitespace-nowrap text-[#e2e2e2]">
              {m}
            </button>
          ))}
        </nav>
        <div className="mr-[2px] ml-auto flex h-[19px] self-start rounded-b-[3px] border border-t-0 border-[#2c2c2c] bg-[#5a5a5a]">
          <button aria-label="最小化" className="flex w-[28px] items-center justify-center border-r border-[#2c2c2c]">
            <Icon className="h-3 w-3" box="0 0 12 12">
              <path d="M1 7h10v3H1z" fill="#eee" />
            </Icon>
          </button>
          <button aria-label="最大化" className="flex w-[27px] items-center justify-center border-r border-[#2c2c2c]">
            <Icon className="h-3 w-3" box="0 0 12 12">
              <path d="M2 3.500h8v5.500H2z" stroke="#eee" strokeWidth="2" />
            </Icon>
          </button>
          <button aria-label="关闭窗口" className="flex w-[47px] items-center justify-center">
            <Icon className="h-3 w-3" box="0 0 12 12">
              <path d="M2 2l8 8M10 2l-8 8" stroke="#eee" strokeWidth="2.200" />
            </Icon>
          </button>
        </div>
      </header>

      <div className="flex h-[34px] shrink-0 items-center border-t border-[#2b2b2b] pb-px pl-[5px] shadow-[inset_0_1px_0_#666]">
        <span className="h-5 w-[3px] bg-[repeating-linear-gradient(#333_0_1px,#5c5c5c_1px_2px)]" />
        <span className="ml-[11px]">
          <MoveGlyph />
        </span>
        <span className="ml-[5px] flex h-6 w-[13px] items-center border-r border-[#404040]">
          <DownTri />
        </span>
        <p className="pl-[421px] text-xs whitespace-nowrap text-white">点按并拖移可调整图案的位置。</p>
      </div>

      <div className="flex min-h-0 flex-1 gap-[3px] border border-[#2b2b2b] bg-[#303030]">
        <Toolbar />
        <DocumentArea />
        <Dock />
        <LayersPanel />
      </div>

      <LayerStyleDialog />

      <svg viewBox="0 0 345 145" className="pointer-events-none absolute top-[257px] left-[489px] h-[145px] w-[345px]" aria-hidden="true">
        <path d="M2 4L21 3.500 18.500 8.500 345 143 344 144 16 15.500 13.500 20z" fill="#f6261a" />
      </svg>

      <div className="pointer-events-none absolute right-[9px] bottom-[20px] flex items-center gap-1">
        <span className="flex h-[22px] w-[42px] items-center justify-center rounded-[50%] bg-[#cf3038] bg-[linear-gradient(#d8565a,#c8242c)] pb-[3px] font-['Liberation_Sans'] text-base leading-4 text-[#ecd9d9] italic">php</span>
        <span className="text-[14px] leading-4 text-[#6a4b4b]">中文网</span>
      </div>
    </div>
  );
}
